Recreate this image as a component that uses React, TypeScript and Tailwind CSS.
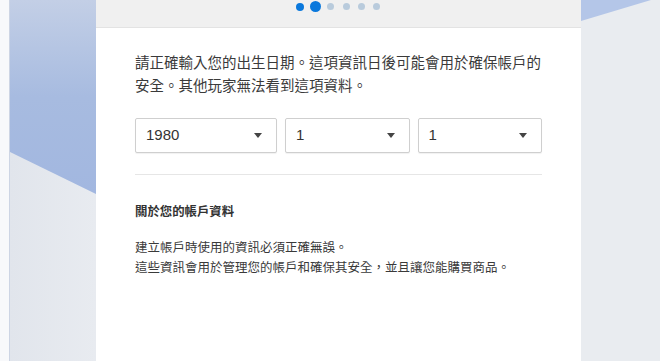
import React from 'react';

const cjk = { fontFamily: '"Noto Sans CJK TC", "Liberation Sans", sans-serif' };
const num = { fontFamily: '"Liberation Sans", "Noto Sans CJK TC", sans-serif' };

const StepDots: React.FC<{ total: number; current: number }> = ({ total, current }) => (
  <div className="flex items-center">
    {Array.from({ length: total }).map((_, i) => {
      let dot = 'h-[7px] w-[7px] bg-[#b9cbdc]';
      if (i === current) dot = 'h-[11px] w-[11px] bg-[#0a78dc]';
      else if (i < current) dot = 'h-[8px] w-[8px] bg-[#0a78dc]';
      return (
        <span key={i} className="flex w-[15.4px] justify-center">
          <span className={`block rounded-full ${dot}`} />
        </span>
      );
    })}
  </div>
);

const DateSelect: React.FC<{ value: string; className?: string }> = ({ value, className = '' }) => (
  <div
    className={`flex h-[35px] items-center justify-between rounded-[2px] border border-[#cfcfcf] bg-white pl-[10px] pr-[14px] shadow-[0_1px_1px_rgba(0,0,0,0.06)] ${className}`}
  >
    <span className="text-[15px] text-[#333]" style={num}>{value}</span>
    <svg width="8" height="5" viewBox="0 0 8 5">
      <path d="M0 0 L8 0 L4 5 Z" fill="#444" />
    </svg>
  </div>
);

export default function App() {
  return (
    <div lang="zh-TW" className="flex h-[361px] w-[660px] overflow-hidden bg-[#e6e9ef]" style={cjk}>
      {/* left backdrop */}
      <div className="flex h-full w-[96px] shrink-0">
        <div className="h-full w-[10px] border-r border-[#cdd5e4] bg-[#f8f9fb]" />
        <div className="h-full flex-1">
          <svg width="100%" height="100%" viewBox="0 0 86 361" preserveAspectRatio="none">
            <defs>
              <linearGradient id="lb" x1="0" y1="0" x2="0" y2="1">
                <stop offset="0" stopColor="#c3cfe6" />
                <stop offset="0.5" stopColor="#a7bbe0" />
                <stop offset="1" stopColor="#a2b7e0" />
              </linearGradient>
              <linearGradient id="lg" x1="0" y1="0" x2="1" y2="0">
                <stop offset="0" stopColor="#e1e5ec" />
                <stop offset="1" stopColor="#e8ebf0" />
              </linearGradient>
            </defs>
            <rect x="0" y="0" width="86" height="361" fill="url(#lg)" />
            <path d="M0 0 H86 V194 L0 152 Z" fill="url(#lb)" />
          </svg>
        </div>
      </div>

      {/* card */}
      <div className="flex h-full w-[485px] shrink-0 flex-col bg-white">
        <div className="flex h-[28px] items-center justify-center border-b border-[#e3e3e3] bg-[#f0f0f0] pb-[14px]">
          <StepDots total={6} current={1} />
        </div>

        <div className="px-[39px] pt-[22px]">
          <p className="text-[14.5px] leading-[23px] text-[#3a3a3a]">
            請正確輸入您的出生日期。這項資訊日後可能會用於確保帳戶的
            <br />
            安全。其他玩家無法看到這項資料。
          </p>

          <div className="mt-[22px] flex gap-[8px]">
            <DateSelect value="1980" className="w-[142px]" />
            <DateSelect value="1" className="flex-1" />
            <DateSelect value="1" className="flex-1" />
          </div>

          <div className="mt-[21px] border-t border-[#e6e6e6]" />

          <h3 className="mt-[26px] text-[12.4px] font-semibold leading-[20px] text-[#333]">關於您的帳戶資料</h3>

          <div className="mt-[16px] text-[12.5px] leading-[20px] text-[#3a3a3a]">
            <p>建立帳戶時使用的資訊必須正確無誤。</p>
            <p>這些資訊會用於管理您的帳戶和確保其安全，並且讓您能購買商品。</p>
          </div>
        </div>
      </div>

      {/* right backdrop */}
      <div className="h-full flex-1">
        <svg width="100%" height="100%" viewBox="0 0 79 361" preserveAspectRatio="none">
          <rect x="0" y="0" width="79" height="361" fill="#e9ecf0" />
          <path d="M0 0 H70 L0 21 Z" fill="#b4c6e8" />
        </svg>
      </div>
    </div>
  );
}
